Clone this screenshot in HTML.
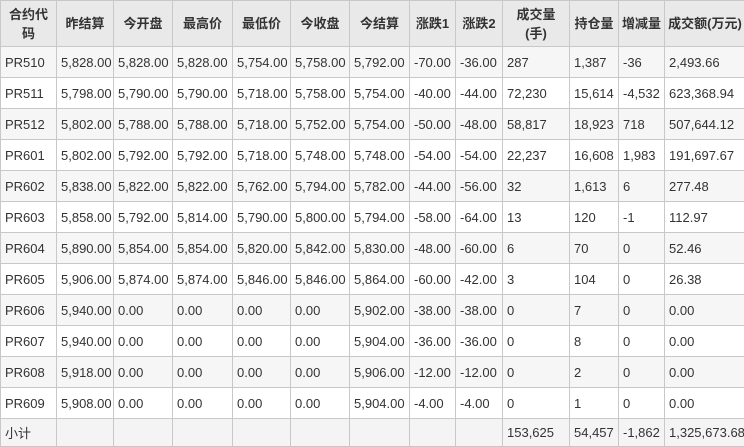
<!DOCTYPE html>
<html><head><meta charset="utf-8"><style>
body{margin:0;background:#fff;}
table{border-collapse:collapse;table-layout:fixed;width:745px;font-family:"Liberation Sans","Noto Sans CJK SC",sans-serif;font-size:13px;color:#333;}
td,th{border:1px solid #c8c8c8;padding:0 0 0 4px;height:30px;text-align:left;white-space:nowrap;overflow:hidden;}
th{background:#e9e9e9;font-weight:bold;text-align:center;height:45px;line-height:19px;padding:0;}
tr:nth-child(even) td{background:#f6f6f6;}
tr:nth-child(odd) td{background:#fff;}
tr.last td{height:27px;background:#f4f4f4;}
</style></head><body>
<table>
<colgroup><col style="width:56px"><col style="width:57px"><col style="width:59px"><col style="width:60px"><col style="width:58px"><col style="width:59px"><col style="width:60px"><col style="width:46px"><col style="width:47px"><col style="width:67px"><col style="width:49px"><col style="width:46px"><col style="width:81px"></colgroup>
<tr><th>合约代<br>码</th><th>昨结算</th><th>今开盘</th><th>最高价</th><th>最低价</th><th>今收盘</th><th>今结算</th><th>涨跌1</th><th>涨跌2</th><th>成交量<br>(手)</th><th>持仓量</th><th>增减量</th><th>成交额(万元)</th></tr>
<tr><td>PR510</td><td>5,828.00</td><td>5,828.00</td><td>5,828.00</td><td>5,754.00</td><td>5,758.00</td><td>5,792.00</td><td>-70.00</td><td>-36.00</td><td>287</td><td>1,387</td><td>-36</td><td>2,493.66</td></tr>
<tr><td>PR511</td><td>5,798.00</td><td>5,790.00</td><td>5,790.00</td><td>5,718.00</td><td>5,758.00</td><td>5,754.00</td><td>-40.00</td><td>-44.00</td><td>72,230</td><td>15,614</td><td>-4,532</td><td>623,368.94</td></tr>
<tr><td>PR512</td><td>5,802.00</td><td>5,788.00</td><td>5,788.00</td><td>5,718.00</td><td>5,752.00</td><td>5,754.00</td><td>-50.00</td><td>-48.00</td><td>58,817</td><td>18,923</td><td>718</td><td>507,644.12</td></tr>
<tr><td>PR601</td><td>5,802.00</td><td>5,792.00</td><td>5,792.00</td><td>5,718.00</td><td>5,748.00</td><td>5,748.00</td><td>-54.00</td><td>-54.00</td><td>22,237</td><td>16,608</td><td>1,983</td><td>191,697.67</td></tr>
<tr><td>PR602</td><td>5,838.00</td><td>5,822.00</td><td>5,822.00</td><td>5,762.00</td><td>5,794.00</td><td>5,782.00</td><td>-44.00</td><td>-56.00</td><td>32</td><td>1,613</td><td>6</td><td>277.48</td></tr>
<tr><td>PR603</td><td>5,858.00</td><td>5,792.00</td><td>5,814.00</td><td>5,790.00</td><td>5,800.00</td><td>5,794.00</td><td>-58.00</td><td>-64.00</td><td>13</td><td>120</td><td>-1</td><td>112.97</td></tr>
<tr><td>PR604</td><td>5,890.00</td><td>5,854.00</td><td>5,854.00</td><td>5,820.00</td><td>5,842.00</td><td>5,830.00</td><td>-48.00</td><td>-60.00</td><td>6</td><td>70</td><td>0</td><td>52.46</td></tr>
<tr><td>PR605</td><td>5,906.00</td><td>5,874.00</td><td>5,874.00</td><td>5,846.00</td><td>5,846.00</td><td>5,864.00</td><td>-60.00</td><td>-42.00</td><td>3</td><td>104</td><td>0</td><td>26.38</td></tr>
<tr><td>PR606</td><td>5,940.00</td><td>0.00</td><td>0.00</td><td>0.00</td><td>0.00</td><td>5,902.00</td><td>-38.00</td><td>-38.00</td><td>0</td><td>7</td><td>0</td><td>0.00</td></tr>
<tr><td>PR607</td><td>5,940.00</td><td>0.00</td><td>0.00</td><td>0.00</td><td>0.00</td><td>5,904.00</td><td>-36.00</td><td>-36.00</td><td>0</td><td>8</td><td>0</td><td>0.00</td></tr>
<tr><td>PR608</td><td>5,918.00</td><td>0.00</td><td>0.00</td><td>0.00</td><td>0.00</td><td>5,906.00</td><td>-12.00</td><td>-12.00</td><td>0</td><td>2</td><td>0</td><td>0.00</td></tr>
<tr><td>PR609</td><td>5,908.00</td><td>0.00</td><td>0.00</td><td>0.00</td><td>0.00</td><td>5,904.00</td><td>-4.00</td><td>-4.00</td><td>0</td><td>1</td><td>0</td><td>0.00</td></tr>
<tr class="last"><td>小计</td><td></td><td></td><td></td><td></td><td></td><td></td><td></td><td></td><td>153,625</td><td>54,457</td><td>-1,862</td><td>1,325,673.68</td></tr>
</table>
</body></html>
